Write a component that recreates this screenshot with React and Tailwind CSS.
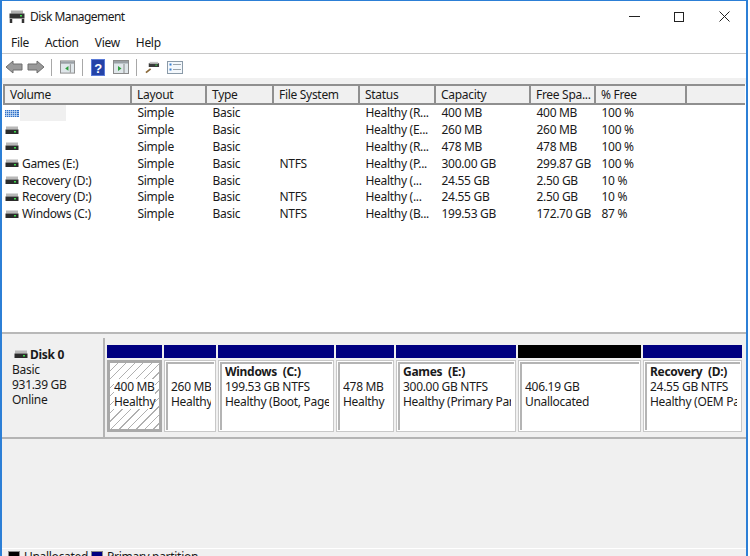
const F = { fontFamily: '"Noto Sans", "Open Sans", sans-serif' };

const cols = [
  ['Volume', 127], ['Layout', 75], ['Type', 67], ['File System', 86], ['Status', 76],
  ['Capacity', 95], ['Free Spa...', 65], ['% Free', 91],
];
const rows = [
  ['', 'Simple', 'Basic', '', 'Healthy (R...', '400 MB', '400 MB', '100 %', 'hatch'],
  ['', 'Simple', 'Basic', '', 'Healthy (E...', '260 MB', '260 MB', '100 %'],
  ['', 'Simple', 'Basic', '', 'Healthy (R...', '478 MB', '478 MB', '100 %'],
  ['Games (E:)', 'Simple', 'Basic', 'NTFS', 'Healthy (P...', '300.00 GB', '299.87 GB', '100 %'],
  ['Recovery (D:)', 'Simple', 'Basic', '', 'Healthy (...', '24.55 GB', '2.50 GB', '10 %'],
  ['Recovery (D:)', 'Simple', 'Basic', 'NTFS', 'Healthy (...', '24.55 GB', '2.50 GB', '10 %'],
  ['Windows (C:)', 'Simple', 'Basic', 'NTFS', 'Healthy (B...', '199.53 GB', '172.70 GB', '87 %'],
];
const parts = [
  { w: 55, lines: ['400 MB', 'Healthy'], hatch: true },
  { w: 52, lines: ['260 MB', 'Healthy'] },
  { w: 116, title: 'Windows  (C:)', lines: ['199.53 GB NTFS', 'Healthy (Boot, Page'] },
  { w: 58, lines: ['478 MB', 'Healthy'] },
  { w: 120, title: 'Games  (E:)', lines: ['300.00 GB NTFS', 'Healthy (Primary Par'] },
  { w: 123, lines: ['406.19 GB', 'Unallocated'], black: true },
  { w: 99, title: 'Recovery  (D:)', lines: ['24.55 GB NTFS', 'Healthy (OEM Pa'] },
];

function Drive({ hatch }) {
  return (
    <svg width="14" height="9" viewBox="0 0 14 9" className="shrink-0">
      {hatch ? (
        <g>
          <rect x="0" y="1" width="14" height="7" fill="#2f6fc8" />
          <path d="M0 2.5h14M0 4.5h14M0 6.5h14M1.5 1v7M3.5 1v7M5.5 1v7M7.5 1v7M9.5 1v7M11.5 1v7" stroke="#cfe2f8" strokeWidth="0.7" />
        </g>
      ) : (
        <g>
          <rect x="1" y="0.5" width="12" height="3" fill="#b8b8b8" />
          <rect x="0.5" y="3.5" width="13" height="4.5" fill="#2b2b2b" />
          <rect x="9" y="5" width="2" height="1.5" fill="#3ddc4a" />
        </g>
      )}
    </svg>
  );
}

function Sep() {
  return <div className="w-px h-[17px] bg-[#a8a8a8] shrink-0" />;
}

function Toolbar() {
  return (
    <div className="h-[24px] shrink-0 flex items-center pl-[3px] pt-[2px] bg-white">
      <svg width="18" height="14" viewBox="0 0 18 14"><path d="M1 7l7-6v3h9v6H8v3z" fill="#9a9a9a" stroke="#6f6f6f" /></svg>
      <svg width="18" height="14" viewBox="0 0 18 14" className="ml-[4px]"><path d="M17 7l-7-6v3H1v6h9v3z" fill="#9a9a9a" stroke="#6f6f6f" /></svg>
      <div className="ml-[6px]"><Sep /></div>
      <svg width="15" height="14" viewBox="0 0 16 14" className="ml-[8px]">
        <rect x="0.5" y="0.5" width="15" height="13" fill="#dfe6ea" stroke="#8a8a8a" />
        <rect x="1" y="1" width="14" height="2.5" fill="#9aa0a5" />
        <rect x="10.5" y="4" width="1" height="9" fill="#8a8a8a" />
        <path d="M9 6v5L5.5 8.5z" fill="#2e9e3e" />
      </svg>
      <div className="ml-[7px]"><Sep /></div>
      <svg width="14" height="17" viewBox="0 0 14 17" className="ml-[8px]">
        <rect width="14" height="17" fill="#2443a8" />
        <rect x="0.5" y="0.5" width="13" height="16" fill="none" stroke="#5a7ad8" />
        <text x="7" y="13.5" textAnchor="middle" fontSize="13" fontWeight="700" fill="#fff" fontFamily="Liberation Sans">?</text>
      </svg>
      <svg width="16" height="14" viewBox="0 0 16 14" className="ml-[8px]">
        <rect x="0.5" y="0.5" width="15" height="13" fill="#dfe6ea" stroke="#8a8a8a" />
        <rect x="1" y="1" width="14" height="2.5" fill="#9aa0a5" />
        <rect x="10.5" y="4" width="1" height="9" fill="#8a8a8a" />
        <path d="M5 6v5l3.5-2.5z" fill="#2e9e3e" />
      </svg>
      <div className="ml-[7px]"><Sep /></div>
      <svg width="15" height="14" viewBox="0 0 16 14" className="ml-[8px]">
        <path d="M1 13l5-4" stroke="#8a6a3a" strokeWidth="2" />
        <rect x="4" y="3" width="11" height="4" fill="#3a3a3a" />
        <rect x="5" y="1.5" width="9" height="2" fill="#c4c4c4" />
        <rect x="11" y="4.5" width="2" height="1" fill="#3ddc4a" />
      </svg>
      <svg width="16" height="13" viewBox="0 0 16 13" className="ml-[7px]">
        <rect x="0.5" y="0.5" width="15" height="12" fill="#f4f8fc" stroke="#8a9aa8" />
        <rect x="2.5" y="2.5" width="2" height="2" fill="#3a7fd0" />
        <rect x="2.5" y="7.5" width="2" height="2" fill="#3a7fd0" />
        <path d="M6 3.5h8M6 8.5h8" stroke="#9aa4ac" />
      </svg>
    </div>
  );
}

function Part({ p }) {
  return (
    <div className="flex flex-col shrink-0 h-[87px]" style={{ width: p.w }}>
      <div className={`h-[13px] shrink-0 ${p.black ? 'bg-black' : 'bg-[#000080]'}`} />
      <div className={`flex-1 min-h-0 mt-[2px] ${p.hatch ? 'p-[3px] bg-[#a9a9a9]' : 'bg-white p-[1px] border border-[#c8c8c8]'}`}>
        <div
          className={`h-full overflow-hidden whitespace-pre ${p.hatch ? 'pl-[4px] bg-[repeating-linear-gradient(135deg,#ffffff_0,#ffffff_5px,#b0b0b0_5px,#b0b0b0_6px)]' : 'pl-[3px] pr-[3px] bg-white border-l-2 border-t-2 border-[#b4b4b4]'}`}
        >
          <div className={`overflow-hidden ${p.title ? '' : p.hatch ? 'pt-[16px]' : 'pt-[15px]'}`}>
            {p.title && <div className="font-bold h-[15px] leading-[15px]">{p.title}</div>}
            {p.lines.map((l) => (
              <div key={l} className={`h-[15px] leading-[15px] ${p.hatch ? 'bg-white w-fit' : ''}`}>{l}</div>
            ))}
          </div>
        </div>
      </div>
    </div>
  );
}

export default function App() {
  return (
    <div className="w-[750px] h-[556px] overflow-hidden bg-white">
      <div style={F} className="w-[748px] h-[556px] overflow-hidden bg-white text-[12px] text-[#1a1a1a] border-l-2 border-r-2 border-t border-[#2c7fd6] flex flex-col tracking-[-0.3px]">
        <div className="h-[31px] shrink-0 flex items-center pl-[7px]">
          <svg width="16" height="14" viewBox="0 0 16 14">
            <rect x="2" y="0.5" width="12" height="3" fill="#b0b0b0" />
            <rect x="0.5" y="3.5" width="15" height="5" fill="#333" />
            <rect x="11" y="5" width="2" height="1.5" fill="#3ddc4a" />
            <path d="M2 9v4M14 9v4" stroke="#333" strokeWidth="2.5" />
          </svg>
          <span className="ml-[5px] text-[12px] tracking-[-0.55px]">Disk Management</span>
          <div className="ml-auto flex items-center pr-[16px]">
            <div className="w-[11px] h-px bg-[#222]" />
            <div className="ml-[34px] w-[10px] h-[10px] border border-[#222]" />
            <svg width="11" height="11" viewBox="0 0 11 11" className="ml-[35px]"><path d="M0.5 0.5l10 10M10.5 0.5l-10 10" stroke="#222" /></svg>
          </div>
        </div>
        <div className="h-[22px] shrink-0 flex items-center pl-[9px] gap-[16px] border-b border-[#c8c8c8]">
          <span>File</span><span>Action</span><span>View</span><span>Help</span>
        </div>
        <Toolbar />
        <div className="h-[6px] shrink-0 bg-[#f0f0f0]" />
        <div className="h-[248px] shrink-0 ml-px mr-px bg-white overflow-hidden">
          <div className="h-[21px] flex border-t-2 border-b-2 border-l-2 border-[#8f8f8f] bg-[#f0f0f0]">
            {cols.map(([c, w]) => (
              <div key={c} className="pl-[5px] pt-px leading-[15px] border-r-2 border-[#8f8f8f] whitespace-nowrap shrink-0" style={{ width: w }}>{c}</div>
            ))}
          </div>
          <div>
            {rows.map((r, i) => (
              <div key={i} className="h-[16.8px] flex items-center">
                <div className="w-[128px] shrink-0 flex items-center pl-[2px] gap-[3px]">
                  <Drive hatch={r[8] === 'hatch'} />
                  {r[8] === 'hatch' && <div className="-ml-[2px] w-[46px] h-[16px] bg-[#f0f0f0]" />}
                  <span>{r[0]}</span>
                </div>
                {r.slice(1, 8).map((v, j) => (
                  <div key={j} className="pl-[6.5px] shrink-0 whitespace-nowrap" style={{ width: cols[j + 1][1] }}>{v}</div>
                ))}
              </div>
            ))}
          </div>
        </div>
        <div className="h-[6px] shrink-0 bg-[#f0f0f0] border-t-2 border-[#b8b8b8]" />
        <div className="flex-1 min-h-0 bg-[#f0f0f0] flex flex-col">
          <div className="h-[101px] shrink-0 flex border-b-2 border-[#b4b4b4] bg-white">
            <div className="w-[103px] shrink-0 bg-[#f0f0f0] border-r-2 border-[#b4b4b4] pl-[10px] pt-[9px]">
              <div className="flex items-center gap-[2px] h-[15px] ml-[2px]">
                <Drive />
                <b className="text-[12px] leading-[15px]">Disk 0</b>
              </div>
              <div className="leading-[15px]">Basic</div>
              <div className="leading-[15px]">931.39 GB</div>
              <div className="leading-[15px]">Online</div>
            </div>
            <div className="flex-1 flex gap-[2px] pl-[2px] pt-[7px] bg-[#f0f0f0]">
              {parts.map((p) => <Part key={p.lines[0]} p={p} />)}
            </div>
          </div>
          <div className="flex-1" />
          <div className="h-[8px] shrink-0 border-t border-white flex items-start pl-[6px] pt-[2px] overflow-hidden">
            <div className="w-[12px] h-[12px] bg-black border border-[#888] shrink-0" />
            <span className="ml-[4px] leading-[12px] whitespace-nowrap">Unallocated</span>
            <div className="ml-[3px] w-[12px] h-[12px] bg-[#000080] border border-[#888] shrink-0" />
            <span className="ml-[4px] leading-[12px] whitespace-nowrap">Primary partition</span>
          </div>
        </div>
      </div>
    </div>
  );
}
